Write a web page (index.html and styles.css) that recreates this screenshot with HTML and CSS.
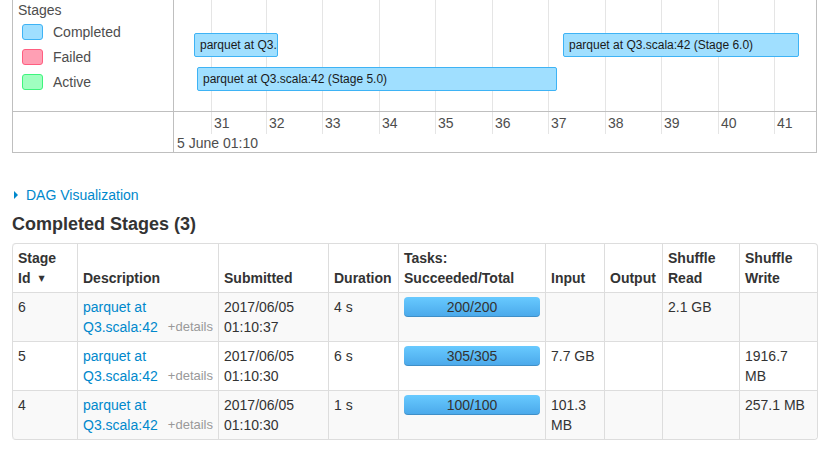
FILE: index.html
```html
<!DOCTYPE html>
<html>
<head>
<meta charset="utf-8">
<link rel="stylesheet" href="styles.css">
</head>
<body>
<div class="page">
  <div class="timeline">
    <div class="legend">
      <div class="legend-title">Stages</div>
      <div class="legend-item"><span class="swatch completed"></span>Completed</div>
      <div class="legend-item"><span class="swatch failed"></span>Failed</div>
      <div class="legend-item"><span class="swatch active"></span>Active</div>
    </div>
    <div class="items">
      <span class="grid-line" style="left:37px"></span>
      <span class="grid-line" style="left:92px"></span>
      <span class="grid-line" style="left:148px"></span>
      <span class="grid-line" style="left:205px"></span>
      <span class="grid-line" style="left:261px"></span>
      <span class="grid-line" style="left:318px"></span>
      <span class="grid-line" style="left:374px"></span>
      <span class="grid-line" style="left:431px"></span>
      <span class="grid-line" style="left:487px"></span>
      <span class="grid-line" style="left:544px"></span>
      <span class="grid-line" style="left:600px"></span>
      <div class="bar" style="left:20px;top:33px;width:84px">parquet at Q3.scala:42 (Stage 4.0)</div>
      <div class="bar" style="left:23px;top:67px;width:360px">parquet at Q3.scala:42 (Stage 5.0)</div>
      <div class="bar" style="left:389px;top:33px;width:236px">parquet at Q3.scala:42 (Stage 6.0)</div>
    </div>
    <div class="legend-axis"></div>
    <div class="axis">
      <span class="tick" style="left:37px">31</span>
      <span class="tick" style="left:92px">32</span>
      <span class="tick" style="left:148px">33</span>
      <span class="tick" style="left:205px">34</span>
      <span class="tick" style="left:261px">35</span>
      <span class="tick" style="left:318px">36</span>
      <span class="tick" style="left:374px">37</span>
      <span class="tick" style="left:431px">38</span>
      <span class="tick" style="left:487px">39</span>
      <span class="tick" style="left:544px">40</span>
      <span class="tick" style="left:600px">41</span>
      <span class="major">5 June 01:10</span>
    </div>
  </div>

  <div class="dag"><span class="arrow"></span><a href="#">DAG Visualization</a></div>

  <h4 class="section-title">Completed Stages (3)</h4>

  <table class="stages">
    <colgroup>
      <col class="c-id"><col class="c-desc"><col class="c-sub"><col class="c-dur"><col class="c-tasks"><col class="c-in"><col class="c-out"><col class="c-sr"><col class="c-sw">
    </colgroup>
    <thead>
      <tr>
        <th>Stage Id<span class="sort">&#x25BC;</span></th>
        <th>Description</th>
        <th>Submitted</th>
        <th>Duration</th>
        <th>Tasks: Succeeded/Total</th>
        <th>Input</th>
        <th>Output</th>
        <th>Shuffle Read</th>
        <th>Shuffle Write</th>
      </tr>
    </thead>
    <tbody>
      <tr>
        <td>6</td>
        <td><a href="#">parquet at Q3.scala:42</a><span class="details">+details</span></td>
        <td>2017/06/05 01:10:37</td>
        <td>4 s</td>
        <td><div class="progress">200/200</div></td>
        <td></td>
        <td></td>
        <td>2.1 GB</td>
        <td></td>
      </tr>
      <tr>
        <td>5</td>
        <td><a href="#">parquet at Q3.scala:42</a><span class="details">+details</span></td>
        <td>2017/06/05 01:10:30</td>
        <td>6 s</td>
        <td><div class="progress">305/305</div></td>
        <td>7.7 GB</td>
        <td></td>
        <td></td>
        <td>1916.7 MB</td>
      </tr>
      <tr>
        <td>4</td>
        <td><a href="#">parquet at Q3.scala:42</a><span class="details">+details</span></td>
        <td>2017/06/05 01:10:30</td>
        <td>1 s</td>
        <td><div class="progress">100/100</div></td>
        <td>101.3 MB</td>
        <td></td>
        <td></td>
        <td>257.1 MB</td>
      </tr>
    </tbody>
  </table>
</div>
</body>
</html>
```

FILE: styles.css
```css
body {
  margin: 0;
  font-family: "Liberation Sans", Arial, sans-serif;
  font-size: 14px;
  line-height: 20px;
  color: #333;
  background: #fff;
}

.page {
  padding: 0 5px 0 12px;
  width: 805px;
}

a {
  color: #0088cc;
  text-decoration: none;
}

/* ---------- timeline ---------- */
.timeline {
  display: grid;
  grid-template-columns: 161px 642px;
  grid-template-rows: 112px 40px;
  width: 805px;
  box-sizing: border-box;
  border: 1px solid #bfbfbf;
  border-top: 0;
}

.legend {
  border-right: 1px solid #bfbfbf;
  border-bottom: 1px solid #bfbfbf;
  color: #4d4d4d;
}

.legend-title {
  margin: 2px 0 0 5px;
  line-height: 16px;
}

.legend-item {
  display: flex;
  align-items: center;
  height: 16px;
  margin-top: 9px;
  line-height: 16px;
}

.legend-title + .legend-item {
  margin-top: 6px;
}

.swatch {
  width: 21px;
  height: 16px;
  box-sizing: border-box;
  margin: 0 10px 0 9px;
  border: 1px solid;
  border-radius: 3px;
}

.swatch.completed {
  background: #a0dfff;
  border-color: #3eb3f5;
}

.swatch.failed {
  background: #ff9fb4;
  border-color: #ff5e80;
}

.swatch.active {
  background: #a0ffc0;
  border-color: #3ef57d;
}

.items {
  position: relative;
  border-bottom: 1px solid #bfbfbf;
  overflow: hidden;
}

.grid-line {
  position: absolute;
  top: 0;
  bottom: 0;
  width: 1px;
  background: #e5e5e5;
}

.bar {
  position: absolute;
  height: 24px;
  box-sizing: border-box;
  padding-left: 5px;
  border: 1px solid #3eb3f5;
  border-radius: 2px;
  background: #a0dfff;
  color: #1a1a1a;
  font-size: 12px;
  line-height: 22px;
  white-space: nowrap;
  overflow: hidden;
}

.legend-axis {
  border-right: 1px solid #bfbfbf;
}

.axis {
  position: relative;
  color: #4d4d4d;
}

.tick {
  position: absolute;
  top: 0;
  height: 22px;
  box-sizing: border-box;
  padding: 3px 0 0 2px;
  border-left: 1px solid #e5e5e5;
  line-height: 16px;
}

.major {
  position: absolute;
  left: 3px;
  top: 23px;
  line-height: 16px;
  white-space: nowrap;
}

/* ---------- DAG link & heading ---------- */
.dag {
  display: flex;
  align-items: center;
  margin-top: 32px;
  padding-left: 2px;
  height: 20px;
}

.arrow {
  width: 0;
  height: 0;
  border-top: 4.5px solid transparent;
  border-bottom: 4.5px solid transparent;
  border-left: 4px solid #0088cc;
  margin-right: 8px;
}

.section-title {
  margin: 9px 0 9px;
  font-size: 18px;
  line-height: 20px;
  font-weight: bold;
  color: #333;
}

/* ---------- table ---------- */
.stages {
  width: 805px;
  table-layout: fixed;
  border-collapse: separate;
  border-spacing: 0;
  border: 1px solid #ddd;
  border-left: 0;
  border-radius: 4px;
}

.c-id { width: 65px; }
.c-desc { width: 141px; }
.c-sub { width: 110px; }
.c-dur { width: 70px; }
.c-tasks { width: 147px; }
.c-in { width: 59px; }
.c-out { width: 58px; }
.c-sr { width: 77px; }
.c-sw { width: 78px; }

.stages th,
.stages td {
  padding: 4px 5px;
  border-left: 1px solid #ddd;
  text-align: left;
  vertical-align: top;
  line-height: 20px;
}

.stages th {
  vertical-align: bottom;
  font-weight: bold;
}

.stages th:first-child {
  border-top-left-radius: 4px;
}

.stages th:last-child {
  border-top-right-radius: 4px;
}

.stages tbody td {
  border-top: 1px solid #ddd;
}

.stages tbody tr:nth-child(odd) td {
  background: #f9f9f9;
}

.stages tbody tr:last-child td:first-child {
  border-bottom-left-radius: 4px;
}

.stages tbody tr:last-child td:last-child {
  border-bottom-right-radius: 4px;
}

.sort {
  display: inline-block;
  font-family: "DejaVu Sans", sans-serif;
  font-size: 8px;
  line-height: 8px;
  margin-left: 8px;
  vertical-align: 2px;
}

.details {
  float: right;
  font-size: 13px;
  color: #999;
}

.progress {
  height: 20px;
  border-radius: 4px;
  background: linear-gradient(to bottom, #68caff, #4aa8ea);
  box-shadow: inset 0 -1px 0 rgba(0, 0, 0, 0.15);
  text-align: center;
  line-height: 20px;
  color: #333;
}
```
